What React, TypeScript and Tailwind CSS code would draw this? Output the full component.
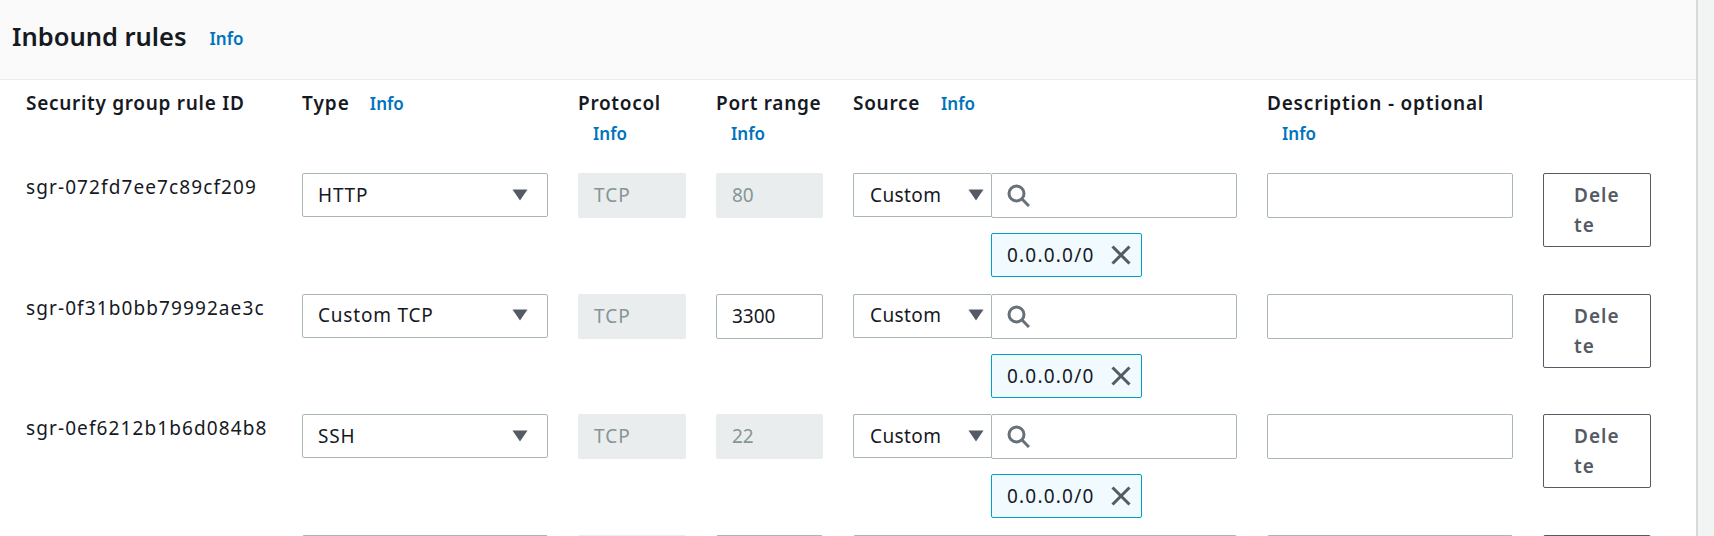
import React from "react";

const Info = ({ className = "" }: { className?: string }) => (
  <span className={"text-[17px] leading-[20px] font-semibold tracking-[0px] text-[#0073bb] " + className}>Info</span>
);

const Caret = () => (
  <svg width="16" height="12" viewBox="0 0 16 12" className="shrink-0">
    <path d="M0.5 0.5h15L8 11.5z" fill="#545b64" />
  </svg>
);

const Search = () => (
  <svg width="23" height="23" viewBox="0 0 23 23" fill="none" stroke="#687078" strokeWidth="3" className="shrink-0">
    <circle cx="9.5" cy="9.5" r="7.5" />
    <path d="M15 15L22 22" />
  </svg>
);

const Close = () => (
  <svg width="22" height="22" viewBox="0 0 22 22" fill="none" stroke="#545b64" strokeWidth="3" className="shrink-0">
    <path d="M2.5 2.5l17 17M19.5 2.5l-17 17" />
  </svg>
);

const fieldBorder = "border border-[#aab7b8] rounded-[2px] bg-white";

const rows = [
  { id: "sgr-072fd7ee7c89cf209", type: "HTTP", port: "80", editable: false },
  { id: "sgr-0f31b0bb79992ae3c", type: "Custom TCP", port: "3300", editable: true },
  { id: "sgr-0ef6212b1b6d084b8", type: "SSH", port: "22", editable: false },
];

const Row = ({ id, type, port, editable }: { id: string; type: string; port: string; editable: boolean }) => (
  <div className="flex h-[120.5px] items-start text-[19px] leading-[24px] text-[#16191f]">
    <div className="w-[302px] pl-[26px] pt-[2px] tracking-[1.1px] whitespace-nowrap">{id}</div>
    <div className={"w-[246px] h-[44px] flex items-center justify-between pb-[1px] pl-[15px] pr-[19px] " + fieldBorder}>
      <span className="tracking-[0.8px]">{type}</span>
      <Caret />
    </div>
    <div className="w-[108px] h-[45px] ml-[30px] flex items-center pb-[1px] pl-[16px] rounded-[2px] bg-[#eaeded] text-[#879596] tracking-[1px]">TCP</div>
    {editable ? (
      <div className={"w-[107px] h-[45px] ml-[30px] flex items-center pb-[1px] pl-[15px] " + fieldBorder}>{port}</div>
    ) : (
      <div className="w-[107px] h-[45px] ml-[30px] flex items-center pb-[1px] pl-[16px] rounded-[2px] bg-[#eaeded] text-[#879596]">{port}</div>
    )}
    <div className={"w-[138px] h-[44px] ml-[30px] flex items-center justify-between pb-[1px] pl-[16px] pr-[7px] border-r-0 rounded-r-none " + fieldBorder}>
      <span className="tracking-[0.4px]">Custom</span>
      <Caret />
    </div>
    <div className="w-[246px]">
      <div className={"h-[45px] flex items-center pl-[15px] " + fieldBorder}>
        <Search />
      </div>
      <div className="mt-[15px] w-[151px] h-[44px] flex items-center justify-between pl-[15px] pr-[9px] border border-[#00a1c9] rounded-[2px] bg-[#f1faff]">
        <span className="tracking-[1.2px]">0.0.0.0/0</span>
        <Close />
      </div>
    </div>
    <div className={"w-[246px] h-[45px] ml-[30px] " + fieldBorder} />
    <div className="w-[108px] h-[74px] ml-[30px] px-[30px] pt-[6px] border border-[#545b64] rounded-[2px] bg-white text-[#545b64] font-semibold tracking-[1px] leading-[30px] break-all">
      Delete
    </div>
  </div>
);

export default function App() {
  return (
    <div className="flex h-[536px] w-[1714px] overflow-hidden bg-white font-['Noto_Sans','Open_Sans',sans-serif]">
      <div className="w-[1698px] border-r-2 border-[#d5dbdb]">
        <div className="flex h-[80px] items-center gap-[23px] border-b border-[#eaeded] bg-[#fafafa] pl-[12px] pb-[8px]">
          <h2 className="text-[25.5px] font-semibold leading-[30px] text-[#16191f]">Inbound rules</h2>
          <Info className="mt-[6px]" />
        </div>
        <div className="flex h-[93px] pt-[11px] text-[19px] font-semibold tracking-[0.7px] leading-[24px] text-[#16191f]">
          <div className="w-[302px] pl-[26px]">Security group rule ID</div>
          <div className="w-[276px] flex gap-[20px]"><span className="tracking-[1px]">Type</span><Info className="mt-[3px]" /></div>
          <div className="w-[138px] flex flex-col"><span>Protocol</span><Info className="ml-[15px] mt-[9px]" /></div>
          <div className="w-[137px] flex flex-col"><span>Port range</span><Info className="ml-[15px] mt-[9px]" /></div>
          <div className="w-[414px] flex gap-[21px]"><span>Source</span><Info className="mt-[3px]" /></div>
          <div className="flex flex-col"><span className="tracking-[0.8px]">Description - optional</span><Info className="ml-[15px] mt-[9px]" /></div>
        </div>
        {rows.map((r) => (
          <Row key={r.id} {...r} />
        ))}
        <div className="flex h-[10px] items-start">
          <div className={"ml-[302px] w-[246px] h-[44px] " + fieldBorder} />
          <div className="ml-[30px] w-[108px] h-[45px] rounded-[2px] bg-[#eaeded]" />
          <div className={"ml-[30px] w-[107px] h-[45px] " + fieldBorder} />
          <div className={"ml-[30px] w-[384px] h-[45px] " + fieldBorder} />
          <div className={"ml-[30px] w-[246px] h-[45px] " + fieldBorder} />
          <div className="ml-[30px] w-[108px] h-[74px] border border-[#545b64] rounded-[2px]" />
        </div>
      </div>
      <div className="flex-1 bg-[#f2f3f3]" />
    </div>
  );
}
